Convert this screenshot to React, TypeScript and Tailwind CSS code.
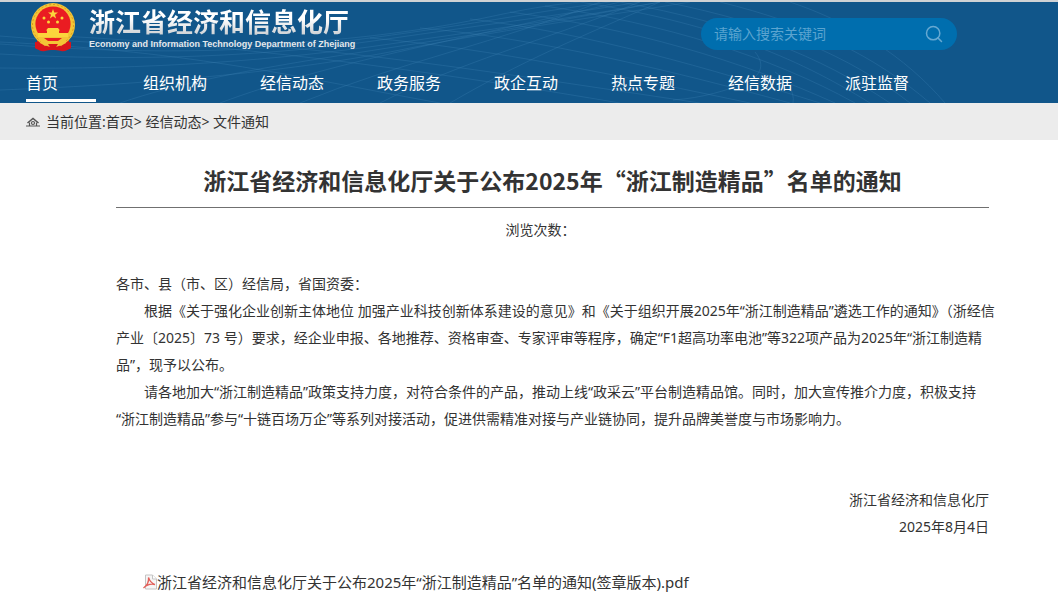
import { Search } from 'lucide-react'

const navItems = ['首页', '组织机构', '经信动态', '政务服务', '政企互动', '热点专题', '经信数据', '派驻监督']

function Emblem() {
  return (
    <svg viewBox="0 0 46 50" className="h-[50px] w-[46px] shrink-0" aria-hidden="true">
      <path d="M8 36 5 46c4 2 6 4 10 3 3-1 5-1 8-1s5 0 8 1c4 1 6-1 10-3l-3-10z" fill="#d9141c" />
      <circle cx="23" cy="23" r="22" fill="#f3c536" />
      <circle cx="23" cy="23" r="20.5" fill="none" stroke="#d99a1e" strokeWidth="1" strokeDasharray="2 2" />
      <circle cx="23" cy="22" r="17.6" fill="#ea1c22" />
      <path d="m23 7 1.300 3.500h3.700l-3 2.300 1.100 3.600-3.100-2.200-3.100 2.200 1.100-3.600-3-2.300h3.700z" fill="#fbd53c" />
      <g fill="#fbd53c">
        <circle cx="14" cy="16" r="1.500" />
        <circle cx="32" cy="16" r="1.500" />
        <circle cx="18.500" cy="20" r="1.500" />
        <circle cx="27.500" cy="20" r="1.500" />
        <path d="M18 26h10l2 2.500h-1V31h9v4H8v-4h9v-2.500h-1z" />
        <path d="M8 35h30l-3 5 4 3-3 3-7-3-6 1-6-1-7 3-3-3 4-3z" fill="#f3c536" />
      </g>
      <path d="M14 36h18l-4 3H18z" fill="#ea1c22" />
      <path d="M5 40c4 0 7 2 10 4l-4 4-6-2zM41 40c-4 0-7 2-10 4l4 4 6-2z" fill="#d9141c" />
      <path d="M18 42h10l-2 3h-6z" fill="#d9141c" />
    </svg>
  )
}

function HeaderPattern() {
  return (
    <svg
      viewBox="0 0 1058 101"
      preserveAspectRatio="xMidYMin slice"
      className="pointer-events-none absolute inset-0 h-full w-full"
      aria-hidden="true"
    >
      <g fill="none" stroke="#3a7fb0" strokeOpacity="0.32" strokeWidth="1">
        <path d="M0 34c120 10 250 14 370 0S500 8 580 0" />
        <path d="M0 42c130 10 250 10 370-6S520 12 610 0" />
        <path d="M0 52c140 8 270 2 380-14S540 16 640 0" />
        <path d="M0 66c150 2 280-8 390-24S560 18 660 0" />
        <path d="M0 88c160-6 300-20 400-40S580 18 690 0" />
        <path d="M120 101C240 60 400 50 660 0" />
        <path d="M220 101C330 60 450 40 620 0" />
        <path d="M300 101C400 60 500 40 600 0" />
        <path d="M380 101C460 60 540 40 640 0" />
        <path d="M450 101C520 60 580 35 660 0" />
        <path d="M0 40c200 10 300 36 440 61" />
        <path d="M60 34c200 10 400 40 560 67" />
        <path d="M200 40c150 6 330 36 500 61" />
        <path d="M370 36c120 10 260 40 380 65" />
        <path d="M420 26c120 10 260 45 370 75" />
        <path d="M470 17c120 14 240 50 350 84" />
        <path d="M510 10c120 16 230 48 325 91" />
        <path d="M545 4c120 18 225 50 310 97" />
        <path d="M580 0c130 20 215 54 290 101" />
        <path d="M620 0c120 22 200 54 270 101" />
        <path d="M665 0c110 22 185 54 245 101" />
        <path d="M720 0c90 22 155 54 210 101" />
        <path d="M790 0c60 20 115 54 155 101" />
        <path d="M755 50c12 14 4 26-12 32s-40 14-70 16M775 70c12 8 20 20 18 31" />
      </g>
    </svg>
  )
}

function HomeIcon() {
  return (
    <svg viewBox="0 0 14 10" className="h-[10px] w-[14px]" fill="none" stroke="#555" aria-hidden="true">
      <path d="m1.500 6 5.500-4.500L12.500 6" strokeWidth="1.500" />
      <path d="M3.500 5.500V9M10.500 5.500V9M0 9h14" strokeWidth="1.200" />
      <circle cx="7" cy="6" r="1.500" strokeWidth="1.200" />
    </svg>
  )
}

function PdfIcon() {
  return (
    <svg viewBox="0 0 14 16" className="h-4 w-[14px] shrink-0" aria-hidden="true">
      <path d="M2.500 1h7l4 4v10h-11z" fill="#f6f6f6" stroke="#c4c4c4" />
      <path d="M9.500 1v4h4" fill="#fff" stroke="#c4c4c4" />
      <path d="M5.500 3.500c1 3 2 5.500 6.500 7-4-1-8 0-11.500 3.500C3.500 12 6 8 5.500 3.500z" fill="none" stroke="#e2605a" strokeWidth="1.300" />
    </svg>
  )
}

export default function App() {
  return (
    <div className="min-h-screen bg-white font-['Noto_Sans','Noto_Sans_CJK_SC',sans-serif] text-sm text-[#333]">
      <header className="relative border-t-2 border-[#d0d2d4] bg-[#11568a]">
        <HeaderPattern />
        <div className="relative flex h-16 items-start justify-between pr-[101px] pl-[30px]">
          <a href="#" className="flex items-start gap-[13px]">
            <Emblem />
            <span className="flex flex-col pt-1">
              <span className="bg-linear-to-b from-white from-40% to-[#c4c8cc] bg-clip-text text-[26px] leading-8 font-bold text-transparent">
                浙江省经济和信息化厅
              </span>
              <span className="font-['Liberation_Sans',sans-serif] text-[9px] leading-3 font-bold whitespace-nowrap text-[#e4e8ec]">
                Economy and Information Technology Department of Zhejiang
              </span>
            </span>
          </a>
          <form className="mt-4 flex h-8 w-64 items-center rounded-full bg-[#006eae] px-[13px]">
            <input
              type="text"
              aria-label="搜索关键词"
              placeholder="请输入搜索关键词"
              className="min-w-0 flex-1 bg-transparent text-sm text-white outline-none placeholder:text-[#5ba4d0]"
            />
            <button type="button" aria-label="搜索">
              <Search className="size-5 text-[#66a9d2]" strokeWidth={1.8} />
            </button>
          </form>
        </div>
        <nav className="relative flex pl-[26px]">
          {navItems.map((item, i) => (
            <a key={item} href="#" className="w-[117px] text-base text-white">
              <span className={i === 0 ? 'block h-[36px] w-[70px] border-b-3 border-white leading-[34px]' : 'block h-[37px] leading-[34px]'}>
                {item}
              </span>
            </a>
          ))}
        </nav>
      </header>

      <div className="flex h-[37px] items-center gap-[6px] bg-[#ececec] pl-[26px]">
        <HomeIcon />
        <nav aria-label="当前位置">
          当前位置:<a href="#">首页</a>&gt; <a href="#">经信动态</a>&gt; <a href="#">文件通知</a>
        </nav>
      </div>

      <main className="pt-[22px] pr-[69px] pl-[116px]">
        <h1 className="border-b border-[#707070] pb-[9px] text-center font-['Noto_Sans_CJK_SC',sans-serif] text-[23px] leading-9 font-bold">
          浙江省经济和信息化厅关于公布2025年“浙江制造精品”名单的通知
        </h1>
        <p className="mt-2 pr-6 text-center leading-7">浏览次数：</p>

        <article className="mt-[26px] leading-[27px]">
          <p>各市、县（市、区）经信局，省国资委：</p>
          <p className="-mr-2 indent-7">
            根据《关于强化企业创新主体地位 加强产业科技创新体系建设的意见》和《关于组织开展2025年“浙江制造精品”遴选工作的通知》（浙经信产业〔2025〕73 号）要求，经企业申报、各地推荐、资格审查、专家评审等程序，确定“F1超高功率电池”等322项产品为2025年“浙江制造精品”，现予以公布。
          </p>
          <p className="indent-7">
            请各地加大“浙江制造精品”政策支持力度，对符合条件的产品，推动上线“政采云”平台制造精品馆。同时，加大宣传推介力度，积极支持<wbr />“浙江制造精品”参与“十链百场万企”等系列对接活动，促进供需精准对接与产业链协同，提升品牌美誉度与市场影响力。
          </p>
          <div className="mt-[54px] text-right">
            <p>浙江省经济和信息化厅</p>
            <p>2025年8月4日</p>
          </div>
        </article>

        <a href="#" className="mt-7 ml-[27px] flex items-center text-[15px] leading-7">
          <PdfIcon />
          浙江省经济和信息化厅关于公布2025年“浙江制造精品”名单的通知(签章版本).pdf
        </a>
      </main>
    </div>
  )
}
